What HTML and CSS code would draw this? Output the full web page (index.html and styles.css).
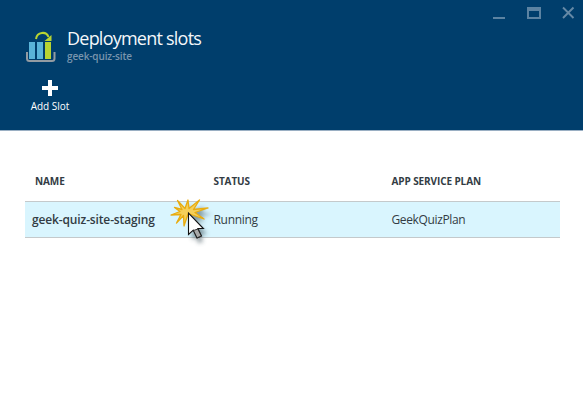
FILE: index.html
```html
<!DOCTYPE html>
<html lang="en">
<head>
<meta charset="utf-8">
<title>Deployment slots</title>
<link rel="stylesheet" href="styles.css">
</head>
<body>
<div class="blade">
  <header class="header">
    <div class="controls">
      <svg width="84" height="18" viewBox="0 0 84 18">
        <path d="M0 12h12v2H0zM34 2h14v12H34zM36 6v6h10V6z" fill="#5c83a2" fill-rule="evenodd"/>
        <path d="M70 2.500l10.500 10.500M80.500 2.500L70 13" stroke="#6589a6" stroke-width="1.900" fill="none"/>
      </svg>
    </div>
    <div class="heading">
      <svg class="logo" width="32" height="32" viewBox="0 0 32 32">
        <path d="M2 21v6.500q0 2.500 2.500 2.500h22.500q2.500 0 2.500-2.500V21" fill="none" stroke="#939ba2" stroke-width="2"/>
        <path d="M4 11h6v17H4zM12 11h6v17h-6z" fill="#59b4d9"/>
        <path d="M20 11h6v17h-6z" fill="#b8d432"/>
        <path d="M11 8C12 .5 21.500 0 23.500 6" fill="none" stroke="#b8d432" stroke-width="2"/>
        <path d="M26.500 4v6h-7z" fill="#b8d432"/>
      </svg>
      <div class="titles">
        <h1 class="title">Deployment slots</h1>
        <div class="subtitle">geek-quiz-site</div>
      </div>
    </div>
    <div class="command">
      <svg width="16" height="16" viewBox="0 0 16 16"><path d="M6 0h4v6h6v4h-6v6H6v-6H0V6h6z" fill="#fff"/></svg>
      <span class="command-label">Add Slot</span>
    </div>
  </header>
  <main class="content">
    <div class="row head">
      <div>NAME</div><div>STATUS</div><div>APP SERVICE PLAN</div>
    </div>
    <div class="row selected">
      <div class="name">geek-quiz-site-staging</div><div>Running</div><div class="plan">GeekQuizPlan</div>
    </div>
  </main>
  <svg class="cursor" width="50" height="54" viewBox="0 0 50 54">
    <defs><filter id="shadow" x="-50%" y="-50%" width="200%" height="200%"><feGaussianBlur stdDeviation="2"/></filter></defs>
    <path d="M22 22l15 17-6 1 2 7-5 1-2-6-4 3zM17 10l7 5 10-3-2 6 10 1-12 3 5 5-14-2z" fill="#304650" opacity=".5" filter="url(#shadow)"/>
    <path d="M7.500 5.500L15 13.500L18 5L19 13.500L29.500 5L23.500 14.500L38 13L25 17.500L34 24L21 19.500L18 19L14 31L13.500 20.500L6.500 28L11 19.500L1 20L10 16.500L4.500 12.500L12 14.500Z" fill="#f4cf5a" stroke="#e8ac10" stroke-width="1.300" stroke-linejoin="round"/>
    <path d="M18.500 18v21.500l4.800-4.300 3.700 7.800 4.500-2-3.600-7.500h5.500z" fill="#fff" stroke="#111" stroke-width="1.100"/>
    <path d="M23.500 35.500l3.600 7.300 4.200-1.800-3.500-7z" fill="#a8a8a8" stroke="#222" stroke-width=".9"/>
  </svg>
</div>
</body>
</html>
```
FILE: styles.css
```css
body { margin: 0; background: #fff; font-family: "Open Sans", "Noto Sans", sans-serif; }
.blade { position: relative; width: 583px; height: 401px; overflow: hidden; }
.header { box-sizing: border-box; height: 131px; background: #003e6c; border-bottom: 1px solid #9aafc3; }
.controls { display: flex; justify-content: flex-end; height: 26px; padding: 5px 6px 0 0; box-sizing: border-box; }
.heading { display: flex; height: 53px; padding-left: 25px; }
.logo { margin-top: 5px; }
.titles { padding-left: 10px; white-space: nowrap; }
.title { margin: 0; font-size: 18px; line-height: 24px; font-weight: 400; color: #f4f7fa; letter-spacing: -.77px; }
.subtitle { font-size: 10px; line-height: 13px; font-weight: 600; color: #7895ae; letter-spacing: -.13px; }
.command { display: flex; flex-direction: column; align-items: center; width: 50px; padding-top: 1px; margin-left: 25px; color: #fff; }
.command-label { font-size: 10px; line-height: 14px; margin-top: 3px; white-space: nowrap; }
.content { padding: 30px 23px 0 25px; }
.row { display: grid; grid-template-columns: 188.500px 178px 1fr; align-items: center; font-size: 12px; color: #333c44; white-space: nowrap; letter-spacing: -.3px; }
.head { height: 40px; font-size: 10px; font-weight: 700; letter-spacing: -.1px; }
.head > :first-child { padding-left: 10px; }
.selected { height: 35px; background: #d9f5fe; border-top: 1px solid #c4c9cb; border-bottom: 1px solid #c4c9cb; }
.name { padding-left: 7px; font-weight: 600; letter-spacing: -.14px; }
.plan { letter-spacing: -.36px; }
.cursor { position: absolute; left: 170px; top: 195px; }
```
